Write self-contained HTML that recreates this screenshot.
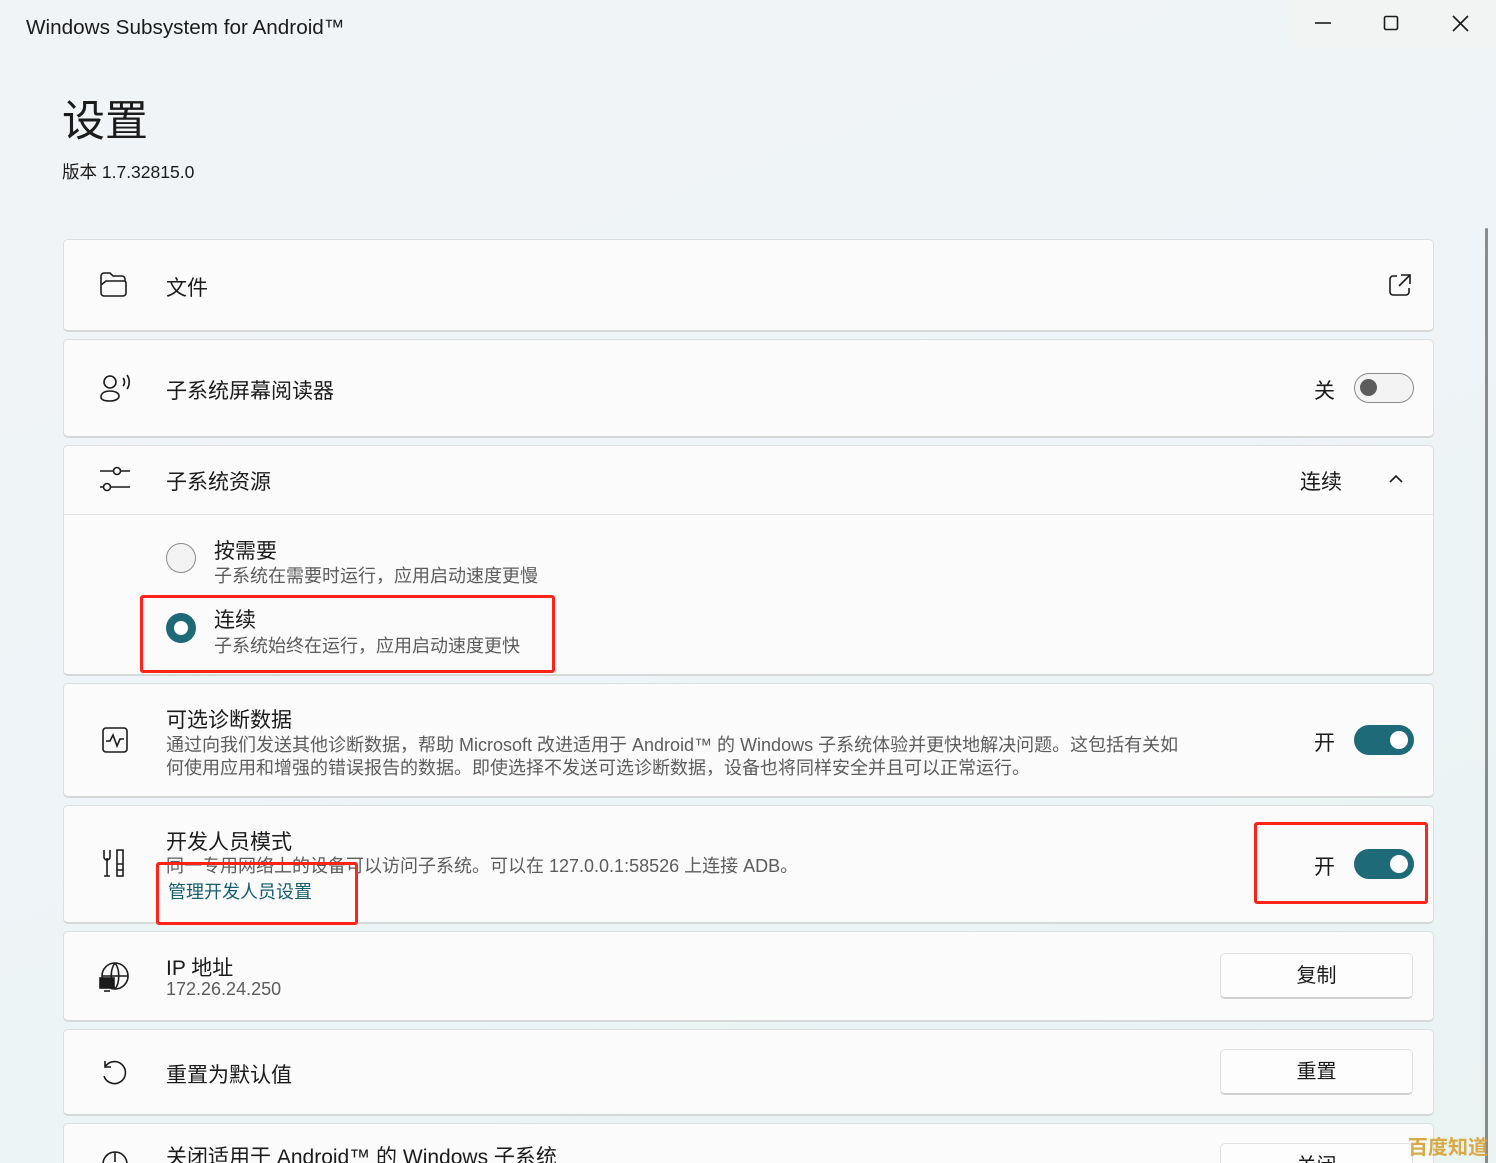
<!DOCTYPE html>
<html><head><meta charset="utf-8"><style>
*{margin:0;padding:0;box-sizing:border-box}
html{width:1496px;height:1163px;overflow:hidden}
body{width:1496px;height:1163px;overflow:hidden;position:relative;font-family:"Liberation Sans","Noto Sans CJK SC",sans-serif;color:#1b1b1b;background:linear-gradient(160deg,#f1f4f6 0%,#eef4f7 50%,#e9f3f2 100%)}
.a{position:absolute}
.card{position:absolute;left:63px;width:1371px;background:#fbfbfb;border:1px solid #dcdfe0;border-bottom:2px solid #d6d8d8;border-radius:5px}
.t{position:absolute;font-size:21px;white-space:nowrap}
.s{position:absolute;font-size:18px;color:#5c5c5c;white-space:nowrap}
.tog{position:absolute;width:60px;height:30px;border-radius:15px;background:#1e6a78}
.tog::after{content:"";position:absolute;right:6px;top:6px;width:18px;height:18px;border-radius:50%;background:#fff}
.off{background:#f3f3f3;border:1.5px solid #8a8a8a}
.off::after{width:17px;height:17px;background:#5c5c5c;top:5px;left:5px;right:auto}
.btn{position:absolute;left:1220px;width:193px;height:46px;background:#fdfdfd;border:1px solid #e2e2e2;border-bottom:2px solid #d0d0d0;border-radius:5px;font-size:20px;text-align:center;line-height:44px}
.red{position:absolute;border:3.5px solid #ff2318;border-radius:3px}
svg{position:absolute;fill:none;stroke:#1b1b1b;stroke-width:1.6}
</style></head><body>
<div class="a" style="left:1290px;top:0;width:206px;height:47px;background:#f2f3f3"></div>
<div class="t" style="left:26px;top:16px;font-size:20.7px">Windows Subsystem for Android™</div>
<svg style="left:1314px;top:15px" width="18" height="18"><path d="M1 8h16"/></svg>
<svg style="left:1383px;top:15px" width="18" height="18"><rect x="1.5" y="1.5" width="13" height="13" rx="1.5"/></svg>
<svg style="left:1452px;top:15px" width="18" height="18"><path d="M1 1l15 15M16 1L1 16"/></svg>
<div class="t" style="left:62px;top:87px;font-size:43px">设置</div>
<div class="t" style="left:62px;top:159px;font-size:17.5px">版本 1.7.32815.0</div>
<div class="a" style="left:1485px;top:228px;width:3px;height:948px;background:#8a8a8a;border-radius:2px"></div>

<div class="card" style="top:239px;height:93px"></div>
<svg style="left:99px;top:270px" width="32" height="30"><path d="M2 6a3 3 0 013-3h6l3 3h9a3 3 0 013 3v2M2 6v17a3 3 0 003 3h19a3 3 0 003-3V13a2 2 0 00-2-2H7l-5 4"/></svg>
<div class="t" style="left:166px;top:272px">文件</div>
<svg style="left:1388px;top:273px" width="24" height="24"><path d="M9 3H5a3 3 0 00-3 3v13a3 3 0 003 3h13a3 3 0 003-3v-4M13 2h9v9M22 2L11 13"/></svg>

<div class="card" style="top:339px;height:99px"></div>
<svg style="left:99px;top:372px" width="34" height="32"><circle cx="11" cy="10" r="6"/><path d="M2 25c0-4 4-6 9-6s9 2 9 5-4 5-9 5-9-1-9-4zM24 6c2 2 2 6 0 8M28 3c3 4 3 10 0 14"/></svg>
<div class="t" style="left:166px;top:375px">子系统屏幕阅读器</div>
<div class="t" style="left:1314px;top:375px">关</div>
<div class="tog off" style="left:1354px;top:373px"></div>

<div class="card" style="top:445px;height:231px"></div>
<div class="a" style="left:64px;top:514px;width:1369px;height:1px;background:#e2e2e2"></div>
<svg style="left:99px;top:465px" width="32" height="28"><path d="M1 6h14M21 6h10M1 22h4M11 22h20"/><circle cx="18" cy="6" r="3.5"/><circle cx="8" cy="22" r="3.5"/></svg>
<div class="t" style="left:166px;top:466px">子系统资源</div>
<div class="t" style="left:1300px;top:466px">连续</div>
<svg style="left:1389px;top:474px" width="14" height="10"><path d="M1 8l6-6 6 6"/></svg>
<div class="a" style="left:166px;top:543px;width:30px;height:30px;border-radius:50%;border:1.5px solid #8a8a8a;background:#f3f3f3"></div>
<div class="t" style="left:214px;top:535px">按需要</div>
<div class="s" style="left:214px;top:562px">子系统在需要时运行，应用启动速度更慢</div>
<div class="a" style="left:166px;top:613px;width:30px;height:30px;border-radius:50%;background:#1e6a78"></div>
<div class="a" style="left:174px;top:621px;width:14px;height:14px;border-radius:50%;background:#fff"></div>
<div class="t" style="left:214px;top:604px">连续</div>
<div class="s" style="left:214px;top:632px">子系统始终在运行，应用启动速度更快</div>
<div class="red" style="left:140px;top:595px;width:415px;height:78px"></div>

<div class="card" style="top:683px;height:115px"></div>
<svg style="left:101px;top:726px" width="28" height="28"><rect x="2" y="2" width="24" height="24" rx="3"/><path d="M5 15h4l3-6 4 11 3-7h4"/></svg>
<div class="t" style="left:166px;top:704px">可选诊断数据</div>
<div class="s" style="left:166px;top:731px">通过向我们发送其他诊断数据，帮助 Microsoft 改进适用于 Android™ 的 Windows 子系统体验并更快地解决问题。这包括有关如</div>
<div class="s" style="left:166px;top:754px">何使用应用和增强的错误报告的数据。即使选择不发送可选诊断数据，设备也将同样安全并且可以正常运行。</div>
<div class="t" style="left:1314px;top:727px">开</div>
<div class="tog" style="left:1354px;top:725px"></div>

<div class="card" style="top:805px;height:119px"></div>
<svg style="left:100px;top:848px" width="28" height="32"><path d="M4 2v7a3 3 0 006 0V2M7 10v18M4 28h6M17 2h6v26h-6zM17 16h6M17 22h6"/></svg>
<div class="t" style="left:166px;top:826px">开发人员模式</div>
<div class="s" style="left:166px;top:852px">同一专用网络上的设备可以访问子系统。可以在 127.0.0.1:58526 上连接 ADB。</div>
<div class="s" style="left:168px;top:878px;color:#135e72">管理开发人员设置</div>
<div class="t" style="left:1314px;top:851px">开</div>
<div class="tog" style="left:1354px;top:849px"></div>
<div class="red" style="left:156px;top:862px;width:202px;height:63px"></div>
<div class="red" style="left:1254px;top:822px;width:174px;height:82px"></div>

<div class="card" style="top:931px;height:91px"></div>
<svg style="left:99px;top:961px" width="32" height="32"><circle cx="16" cy="15" r="13"/><path d="M3 15h26M16 2c-5 6-5 20 0 26M16 2c5 6 5 20 0 26"/><rect x="1" y="17" width="14" height="10" fill="#1b1b1b"/><path d="M5 30h6"/></svg>
<div class="t" style="left:166px;top:952px">IP 地址</div>
<div class="s" style="left:166px;top:979px">172.26.24.250</div>
<div class="btn" style="top:953px">复制</div>

<div class="card" style="top:1029px;height:87px"></div>
<svg style="left:99px;top:1057px" width="32" height="32"><path d="M6 4v6h6"/><path d="M6 10a11 11 0 11-1 9"/></svg>
<div class="t" style="left:166px;top:1059px">重置为默认值</div>
<div class="btn" style="top:1049px">重置</div>

<div class="card" style="top:1123px;height:80px"></div>
<svg style="left:99px;top:1150px" width="32" height="20"><path d="M4 14a12 12 0 0124 0M16 2v10"/></svg>
<div class="t" style="left:166px;top:1141px">关闭适用于 Android™ 的 Windows 子系统</div>
<div class="btn" style="top:1143px">关闭</div>
<div class="t" style="left:1408px;top:1131px;font-size:20px;font-weight:bold;color:#d9a945">百度知道</div>
</body></html>
